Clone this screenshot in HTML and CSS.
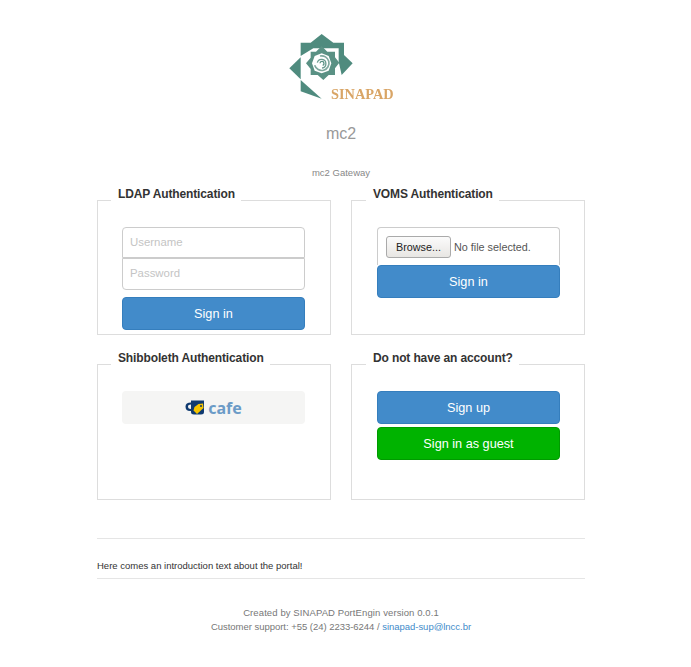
FILE: index.html
```html
<!DOCTYPE html>
<html lang="en">
<head>
<meta charset="utf-8">
<title>mc2</title>
<link rel="stylesheet" href="styles.css">
</head>
<body>
<main class="page">
  <header class="masthead">
    <svg class="logo" width="107" height="72" viewBox="54 39 321 216" aria-hidden="true">
      <defs><filter id="soft"><feGaussianBlur stdDeviation="1.6"/></filter></defs>
      <g filter="url(#soft)">
        <path fill="#4f8b7e" d="M155 42 L190 68 H222 V105 L248 130 L215 165 L206 125 V85 H130 L92 108 V68 H122 Z"/>
        <path fill="#4f8b7e" d="M92 112 L58 145 L92 178 Z"/>
        <path fill="#4f8b7e" d="M92 180 L155 236 L92 214 Z"/>
        <path fill="#5a9184" fill-rule="evenodd" d="M155 78 L172 95 H195 V112 L208 128 L195 145 V165 H176 L160 180 L143 165 H122 V147 L108 130 L122 113 V95 H138 Z M155 100 L134 108 L126 130 L134 152 L155 160 L176 152 L184 130 L176 108 Z"/>
        <path fill="none" stroke="#7fa89e" stroke-width="5" d="M150 108 A22 22 0 1 1 134 136"/>
        <path fill="none" stroke="#6c9c90" stroke-width="4" d="M142 128 A13 13 0 1 1 156 144"/>
        <path fill="none" stroke="#5a9184" stroke-width="4" d="M150 130 A6 6 0 1 1 158 136"/>
        <text class="logo-word" x="183" y="237">SINAPAD</text>
      </g>
    </svg>
    <h1 class="title">mc2</h1>
    <p class="subtitle">mc2 Gateway</p>
  </header>

  <section class="panels">
    <fieldset class="panel">
      <legend class="panel-title">LDAP Authentication</legend>
      <form class="stack">
        <input class="field field-top" type="text" placeholder="Username">
        <input class="field field-bottom" type="password" placeholder="Password">
        <button class="btn btn-blue btn-spaced" type="button">Sign in</button>
      </form>
    </fieldset>

    <fieldset class="panel panel-right">
      <legend class="panel-title">VOMS Authentication</legend>
      <form class="stack">
        <div class="file-box">
          <span class="file-button">Browse...</span>
          <span class="file-label">No file selected.</span>
        </div>
        <button class="btn btn-blue" type="button">Sign in</button>
      </form>
    </fieldset>

    <fieldset class="panel panel-low">
      <legend class="panel-title">Shibboleth Authentication</legend>
      <div class="stack">
        <a class="cafe" href="#">
          <svg width="20" height="15" viewBox="0 0 20 15" aria-hidden="true">
            <path fill="#0f3a70" d="M6 0.5 H19 V12 Q19 14.5 16 14.5 H9 Q6 14.5 6 12 V11 Q0.5 11.5 0.5 6.5 Q0.5 2.5 6 2.5 Z M6 4.5 Q3 4.5 3 6.5 Q3 9 6 9 Z"/>
            <path fill="#f5c400" d="M18 3.5 L18.5 8 L12 14 L8.5 10.5 L9.5 7 L13.5 4 Z"/>
            <circle cx="16" cy="6" r="1" fill="#0f3a70"/>
          </svg>
          <span class="cafe-word">cafe</span>
        </a>
      </div>
    </fieldset>

    <fieldset class="panel panel-right panel-low">
      <legend class="panel-title">Do not have an account?</legend>
      <div class="stack">
        <button class="btn btn-blue" type="button">Sign up</button>
        <button class="btn btn-green" type="button">Sign in as guest</button>
      </div>
    </fieldset>
  </section>

  <hr class="rule rule-first">
  <p class="intro">Here comes an introduction text about the portal!</p>
  <hr class="rule">

  <footer class="footer">
    <p class="credit">Created by SINAPAD PortEngin version 0.0.1</p>
    <p class="support">Customer support: +55 (24) 2233-6244 / <a href="#">sinapad-sup@lncc.br</a></p>
  </footer>
</main>
</body>
</html>
```

FILE: styles.css
```css
* { box-sizing: border-box; }

html, body { margin: 0; background: #fff; }

body {
  font-family: "Liberation Sans", Arial, sans-serif;
  font-size: 10px;
  line-height: 14px;
  color: #333;
}

.page {
  width: 488px;
  margin-left: 97px;
  padding-top: 33px;
}

.masthead { text-align: center; }

.logo { display: block; margin: 0 0 0 191px; }

.logo-word {
  font-family: "Liberation Serif", serif;
  font-weight: 700;
  font-size: 43px;
  fill: #d9a566;
}

.title {
  margin: 19px 0 0;
  font-size: 16px;
  line-height: 20px;
  font-weight: 400;
  color: #999;
}

.subtitle {
  margin: 23px 0 0;
  font-size: 9.5px;
  line-height: 12px;
  color: #888;
}

.panels {
  display: grid;
  grid-template-columns: 234px 234px;
  column-gap: 20px;
  row-gap: 14px;
  margin-top: 6px;
}

.panel {
  height: 150px;
  margin: 0;
  padding: 0 25px 0 24px;
  border: 1px solid #ddd;
  min-width: 0;
}

.panel-low { height: 151px; }

.panel-right { padding: 0 24px 0 25px; }

.panel-title {
  margin-left: -11px;
  padding: 0 6px 12px 7px;
  font-size: 12px;
  line-height: 18px;
  font-weight: 700;
  letter-spacing: -0.13px;
  color: #333;
}

.stack { display: flex; flex-direction: column; padding-top: 12px; }

.field {
  width: 100%;
  padding: 0 7px 2px;
  border: 1px solid #ccc;
  background: #fff;
  font: 11.4px "Liberation Sans", Arial, sans-serif;
  color: #333;
}

.field::placeholder { color: #c4c4c4; opacity: 1; }

.field-top { height: 31px; border-radius: 4px 4px 0 0; }
.field-bottom { height: 32px; border-radius: 0 0 4px 4px; }

.btn {
  display: block;
  width: 100%;
  height: 33px;
  padding: 0;
  border: 1px solid;
  border-radius: 4px;
  font: 12.7px "Liberation Sans", Arial, sans-serif;
  color: #fff;
}

.btn-blue { background: #428bca; border-color: #357ebd; }
.btn-green { background: #00b300; border-color: #009a00; margin-top: 3px; }
.btn-spaced { margin-top: 7px; }

.file-box {
  display: flex;
  align-items: center;
  gap: 3px;
  height: 38px;
  padding: 0 8px;
  border: 1px solid #ccc;
  border-bottom: 0;
  border-radius: 4px 4px 0 0;
  font-size: 10.8px;
  color: #555;
}

.file-button {
  display: flex;
  align-items: center;
  justify-content: center;
  width: 65px;
  height: 22px;
  border: 1px solid #aaa;
  border-radius: 3px;
  background: linear-gradient(#fbfbfb, #e8e6e3);
  color: #222;
}

.cafe {
  display: flex;
  align-items: center;
  justify-content: center;
  gap: 3px;
  height: 33px;
  border-radius: 4px;
  background: #f5f5f4;
  text-decoration: none;
}

.cafe-word {
  font-family: "Noto Sans", sans-serif;
  font-weight: 700;
  font-size: 16px;
  line-height: 18px;
  color: #6b9bc7;
}

.rule {
  margin: 0;
  border: 0;
  border-top: 1px solid #e5e5e5;
}

.rule-first { margin-top: 38px; }

.intro {
  margin: 20px 0 5px;
  font-size: 9.5px;
  line-height: 14px;
}

.footer {
  margin-top: 27px;
  text-align: center;
  font-size: 9.5px;
  color: #777;
}

.footer p { margin: 0; line-height: 14px; }
.footer .credit { letter-spacing: 0.1px; }
.footer .support { letter-spacing: -0.03px; }
.footer a { color: #428bca; text-decoration: none; }
```
